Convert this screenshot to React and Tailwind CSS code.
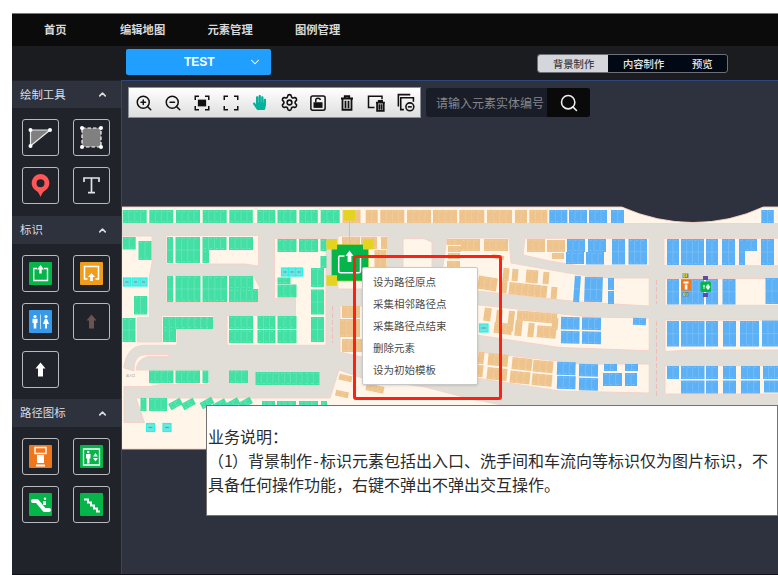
import React from "react";
import { ZoomIn, ZoomOut, Settings, ChevronDown, ChevronUp, Search } from "lucide-react";
import { FaHandPaper } from "react-icons/fa";

const GREEN = [
  [122.7, 237, 13, 12.5], [138.5, 241, 13, 19], [167, 237, 6, 26], [175.5, 237, 24.5, 26], [202.5, 237, 24, 13],
  [202.5, 250, 6.5, 13], [229, 237, 24, 13], [277.5, 239, 19, 13], [299, 239, 19, 13], [320.5, 239, 6, 12],
  [320.5, 256, 6, 12], [311, 268, 13, 19], [311, 289.5, 13, 25], [277.5, 277.5, 13, 6.5], [277.5, 284.5, 19, 13],
  [167, 276, 6, 26], [175.5, 276, 25, 26], [202.5, 276, 24.5, 26], [229, 276, 24, 13], [229, 289, 29, 13],
  [134, 296, 13, 18.5], [122.5, 318, 13, 24], [163, 317, 50, 12], [163, 329, 13, 13],
  [229, 316, 24, 13], [229, 330, 24, 13], [257.5, 316, 18, 13], [257.5, 330, 18, 13], [277.5, 316, 19, 13],
  [277.5, 330, 19, 13], [311, 317, 13, 25], [149, 370.5, 24.5, 12.5], [175.5, 370.5, 24.5, 12.5],
  [202.5, 370.5, 6, 12.5], [229, 370.5, 19, 12.5], [255.5, 372, 64, 13], [140.5, 398, 6, 13], [149, 398, 18, 13],
  [169, 400.5, 13, 7, -28], [182, 400.5, 13, 7, -28], [200.5, 399.5, 13, 7, -28], [213.5, 401, 13, 7, -28],
  [226.5, 400, 13, 7, -28], [239, 399.5, 13, 7, -28], [262, 401, 13, 5], [277, 401, 19, 5], [299, 401, 19, 5],
  [321, 401, 6, 5],
  [122.7, 210, 24, 13], [149.3, 210, 24, 13], [176, 210, 24, 13], [202.7, 210, 24, 13], [229.3, 210, 23.5, 13],
  [257.3, 210, 18, 13], [277.5, 210, 19, 13], [299.3, 210, 18.5, 13], [320.7, 210, 19, 13],
];
const ORANGE = [
  [342.5, 210, 18, 13], [365.7, 210, 12, 13], [380.3, 210, 24, 13], [407, 210, 24, 13], [433, 210, 24, 13],
  [459.3, 210, 25, 13], [487, 210, 25, 13], [515, 210, 12, 13], [529.3, 210, 18, 13],
  [342, 237, 18, 12], [361, 237, 16, 12], [381, 237, 6, 12], [374.5, 250, 12, 19],
  [447, 239, 14, 6], [461, 239, 19, 12], [484, 239, 24, 12], [448, 246, 13, 6], [448, 253, 12, 6], [447, 261, 13, 7],
  [527, 239, 18, 13], [547, 240, 18, 12], [552, 253, 12, 6], [492, 255, 12, 4, 10],
  [478, 277, 19, 13, 9], [503, 268, 6, 13, 5], [512, 269, 6, 12, 5], [526, 270, 12, 13, 4], [543, 272, 6, 12, 5],
  [509, 284, 38, 12, 6], [551, 287, 6, 12, 5], [501, 281, 6, 12, 5],
  [484, 308, 7, 13, 8], [496, 310, 6, 16, 6], [508, 311, 6, 20, 6], [494, 323, 18, 11, 7], [517, 312, 40, 10, 5],
  [515, 320, 7, 16, 6], [528, 323, 6, 14, 6], [537, 326, 19, 12, 5], [552, 318, 6, 12, 5],
  [478, 352, 6, 12, 6], [488, 354, 20, 12, 6], [512, 358, 20, 12, 6], [533, 360.5, 20, 12, 5],
  [477, 365, 6, 12, 6], [487, 368, 20, 12, 6], [510, 371.5, 20, 12, 6], [532, 374, 20, 12, 5],
  [342, 306, 18, 12], [340, 319, 20, 18], [342, 339, 20, 13],
  [339, 375, 13, 6, 12], [335.5, 391, 13, 6, 12], [366, 385, 18, 7, 12],
];
const BLUE = [
  [549.3, 210, 18, 13], [569, 210, 18, 13], [589, 210, 18, 13], [611, 210, 13, 13], [761.3, 210, 12.5, 13],
  [567, 239, 18, 13], [588, 239, 18, 13], [566, 252, 18, 12], [586, 252, 18, 12.5], [612, 239, 13, 25.5],
  [628.5, 239, 18.5, 25.5], [667, 239, 12, 26], [681, 239, 23, 26], [706, 239, 12, 26], [722, 239, 13, 26],
  [739, 239, 6, 26], [745, 239, 12, 12], [761, 239, 13, 26],
  [574, 276, 6, 26, 4], [584.5, 277, 18, 25, 2], [608, 278, 6, 12], [608, 291, 6, 13],
  [667, 279, 12, 25.5], [681, 279, 23, 25.5], [706, 279, 12, 25.5], [722.5, 279, 13, 25.5], [765.5, 278, 13, 26],
  [561, 317, 18.5, 12.5, 1], [582, 317.5, 19, 12.5, 1], [561, 331, 18.5, 12.5, 1], [582, 331.5, 19, 12.5, 1],
  [633, 318, 13, 7, 3], [667, 321, 12, 25.5], [681, 321, 23.5, 25.5], [706, 321, 12, 25.5], [723, 321, 13, 25.5],
  [740, 321, 19, 25.5], [762, 320.5, 18, 26],
  [557, 362, 18.5, 13, 2], [579, 364, 19, 12.5, 1], [557, 376, 18.5, 13, 2], [579, 378, 19, 12.5, 1],
  [604, 364, 13, 7], [625, 364, 13, 7], [603, 373, 19, 13], [625, 373, 12, 13],
  [667, 366, 12, 13], [681, 366, 23.5, 13], [706, 366, 12, 13], [723, 366, 13, 13], [741, 366, 19, 13], [763, 366, 17, 13],
  [681, 380.5, 23.5, 13], [706, 380.5, 12, 13], [723, 380.5, 13, 13], [741, 380.5, 19, 13], [764, 380.5, 16, 12],
];
const CYAN = [
  [123.5, 278, 7], [132, 278, 7], [140, 278, 7], [281.5, 268, 7], [288.5, 268, 7], [295.5, 268, 7],
  [146.5, 423.5, 8], [163, 423.5, 8], [479.5, 324, 8.5],
];
const ISLANDS = [
  "M121 207H621.700Q657 222.500 693 222.500Q730 222.500 763.300 207H779V223.500H121Z",
  "M121 236H152V263L149.500 276V317.500H137.500V342H161.700V315.500H213.500V329.500H177V345.300H142Q127 347 124 366V368L134 371Q133 356 145 354.600H169V356.600H148Q137 359 136 370H209.500V384.500H160L150 386.500H124V422.500H144.500L136 398H330L339 370L362 378L425 387L471 399L507 406V449H121Z",
  "M166 235.500H258.500V266L245 264H166Z",
  "M166 275.500H253L259.500 287L257 302.500H166Z",
  "M274.500 238.500H326V345.300H227V315.500H295.500V298.500H274.500Z",
  "M338 236H387.500V289H338Z",
  "M403 238.700H424L432 242V290H403Z",
  "M340 306H420V357H362L340 352Z",
  "M447 238H509L511 263L580 275L608 278H649.200V306L580 302L478 291L440 287Z",
  "M525 238.300H649.200V265.700H578L550 261L523 255Z",
  "M470 304L590 317L649.200 318V350.700L560 347.500L470 334Z",
  "M470 351L557 361L580 364H649.200V393L560 391L470 377Z",
  "M664 238.300H779V265.700H664Z",
  "M665 278.700H779V305.300H665Z",
  "M665 320H779V350H690L665 351.500Z",
  "M665 365.700H779V394H665Z",
];

function Lots({ items, fill }) {
  return items.map(([x, y, w, h, r], i) => (
    <g key={i} transform={`translate(${x} ${y})${r ? ` rotate(${r} ${w / 2} ${h / 2})` : ""}`}>
      <rect width={w} height={h} fill={fill} />
      <path
        d={`${Array.from({ length: Math.max(0, Math.round(w / 6) - 1) }, (_, k) => `M${((k + 1) * w) / Math.round(w / 6)} 0V${h}`).join("")}${h > 20 ? `M0 ${h / 2}H${w}` : ""}`}
        stroke="#fff" strokeOpacity=".25" strokeWidth=".6"
      />
      <path d={`M1.500 ${h - 1.5}H${w - 1}M1.500 1.500H${w - 1}`} stroke="#fff" strokeOpacity=".28" strokeWidth=".7" strokeDasharray="2 4" />
    </g>
  ));
}

function ParkingMap() {
  return (
    <svg className="block h-full w-full" viewBox="122 81 656 493" preserveAspectRatio="none">
      <path d="M121 207H621.700Q657 222.500 693 222.500Q730 222.500 763.300 207H779V449H121Z" fill="#e1ded8" />
      {ISLANDS.map((d) => <path key={d} d={d} fill="#fff6e9" stroke="#f5cfc7" strokeWidth=".9" />)}
      <path d="M332.500 306V343M656.500 280V304M656.500 321V396" stroke="#f0b9b3" strokeWidth=".9" strokeDasharray="5 2" />
      <Lots items={GREEN} fill="#43e0a5" />
      <Lots items={ORANGE} fill="#eec38c" />
      <Lots items={BLUE} fill="#5cb0f5" />
      {CYAN.map(([x, y, s]) => (
        <g key={`${x}-${y}`}>
          <rect x={x} y={y} width={s} height="8" fill="#6de6e0" stroke="#26f5e3" strokeWidth="1.200" />
          <path d={`M${x + 2} ${y + 4}h${s - 4}`} stroke="#5b9fc0" strokeWidth="1.200" />
        </g>
      ))}
      <text x="126" y="377" fontSize="3" fill="#8e8a84" fontFamily="Noto Sans CJK SC">出入口</text>
      <path d="M349.500 220V244" stroke="#e4d420" />
      <rect x="331.500" y="244.500" width="37" height="36.500" fill="#06b549" stroke="#bfd12b" strokeWidth=".7" />
      <path d="M344.500 256H340Q338.700 256 338.700 257.500V271Q338.700 272.700 340.500 272.700H359Q360.500 272.700 360.500 271V257.500Q360.500 256 359 256H355" fill="none" stroke="#fff" strokeWidth="1.500" />
      <path d="M349.500 250.500L353.500 256H351.400V262H347.600V256H345.500Z" fill="#fff" />
      <path d="M344 210h11v10.500h-11zM326.500 239h10.500v10.500h-10.500zM363 239h10.500v10.500h-10.500zM326.500 275.300h10.500v10.500h-10.500z" fill="#e4d420" />
      <path d="M682.500 273.500h6v4.500h-6zM682.500 292h6v4.500h-6z" fill="#5c8aa0" />
      <path d="M683.500 274.500h1.500v2.500h-1.500zM686.500 274v3M683.500 293h1.500v2.500h-1.500zM687 293v3" stroke="#d9d52c" strokeWidth=".9" fill="none" />
      <rect x="681" y="280" width="10" height="10.500" fill="#f0761b" />
      <path d="M683.500 281.500h5v2h-5zM684.800 284.500h2.600v5h-2.600z" fill="#fff" />
      <path d="M703 276h5v4h-5zM703 293h5v4h-5z" fill="#6649a5" />
      <rect x="700.500" y="281.500" width="10.500" height="10.500" rx="1.500" fill="#06b549" />
      <path d="M704 285v4M703 286h2M708 284.500l-1.700 2h3.400zM708 289.500l-1.700-2h3.400z" fill="#fff" stroke="#fff" strokeWidth=".8" />
    </svg>
  );
}

function Icon({ children, box = 24, className = "size-[18px]" }) {
  return (
    <svg viewBox={`0 0 ${box} ${box}`} className={className} fill="none" stroke="currentColor" strokeWidth="2">
      {children}
    </svg>
  );
}

function Trash() {
  return <path d="M4 6H20M9 5V3H15V5M6 7V21H18V7M10 9V19M14 9V19" />;
}

function Tool({ children, color = "" }) {
  return <div className={`flex w-[29.1px] items-center justify-center ${color}`}>{children}</div>;
}

function Toolbar() {
  return (
    <div className="flex h-[31px] w-[293px] border border-[#8a8f94] bg-gradient-to-b from-white to-[#dedede] text-[#111]">
      <Tool><ZoomIn size={18} strokeWidth={2} /></Tool>
      <Tool><ZoomOut size={18} strokeWidth={2} /></Tool>
      <Tool><Icon><path d="M3 8V3H8M16 3H21V8M21 16V21H16M8 21H3V16" /><rect x="7.500" y="8.500" width="9" height="7" fill="currentColor" /></Icon></Tool>
      <Tool><Icon><path d="M3 8V3H8M16 3H21V8M21 16V21H16M8 21H3V16" /></Icon></Tool>
      <Tool color="text-[#07b29c]"><FaHandPaper size={15} /></Tool>
      <Tool><Settings size={19} strokeWidth={2} /></Tool>
      <Tool><Icon><rect x="2.500" y="2.500" width="19" height="19" rx="2.500" /><rect x="6" y="11" width="12" height="7.500" fill="currentColor" stroke="none" /><path d="M9 11V8Q9 5.500 12 5.500Q15 5.500 15 8" /></Icon></Tool>
      <Tool><Icon><g strokeWidth="2.400"><Trash /></g></Icon></Tool>
      <Tool><Icon><path d="M10 18H2V3H20V7" /><g transform="translate(9 7) scale(.74)" strokeWidth="3.200"><Trash /></g></Icon></Tool>
      <Tool><Icon className="size-[19px]"><path d="M3 17V2H18M10 21H6V6H22V11" /><circle cx="17.500" cy="17.500" r="5" /><path d="M15 17.500H20" /></Icon></Tool>
    </div>
  );
}

function Tile({ children, bg = "" }) {
  return (
    <div className="flex size-[37px] items-center justify-center rounded-[3px] border border-[#b9babd]">
      <div className={`size-[23px] rounded-[1px] ${bg}`}>
        <svg viewBox="0 0 23 23" className="block size-full overflow-visible" fill="none">{children}</svg>
      </div>
    </div>
  );
}

function Section({ title, first, children }) {
  return (
    <section>
      <div className={`flex items-center justify-between bg-[#2e323d] pr-[13px] pl-2 text-[#dcdde0] ${first ? "h-[27px]" : "h-7"}`}>
        <h2 className="text-[11.4px] leading-none">{title}</h2>
        <ChevronUp size={11} strokeWidth={3.5} />
      </div>
      <div className="grid grid-cols-[37px_37px] gap-x-[14px] gap-y-[11px] px-[10px] pt-[11px] pb-[11px]">{children}</div>
    </section>
  );
}

const arrow = "M11.500 4.500L16.500 10.500H14V18.500H9V10.500H6.500Z";

function Sidebar() {
  return (
    <aside className="w-[109px] shrink-0 bg-[#20232a] pt-px">
      <Section title="绘制工具" first>
        <Tile><path d="M1.500 4H21L1.500 20Z" fill="#808080" stroke="#e9e9e9" strokeWidth="1.200" /><g fill="#fff"><circle cx="1.500" cy="4" r="2" /><circle cx="21" cy="4" r="2" /><circle cx="1.500" cy="20" r="2" /></g></Tile>
        <Tile><path d="M2 2H21V21H2Z" fill="#808080" stroke="#fff" strokeWidth="1.200" strokeDasharray="3.500 2" /><g fill="#fff"><circle cx="2" cy="2" r="2" /><circle cx="21" cy="2" r="2" /><circle cx="2" cy="21" r="2" /><circle cx="21" cy="21" r="2" /></g></Tile>
        <Tile><path fillRule="evenodd" d="M11.500 0A9 9 0 0 0 7.500 17Q9.500 18 11.500 23Q13.500 18 15.500 17A9 9 0 0 0 11.500 0ZM11.500 5.200A4 4 0 1 1 11.500 13.200A4 4 0 0 1 11.500 5.200Z" fill="#ff5757" /></Tile>
        <Tile><path d="M4 8V4H19V8M11.500 4V18.500M8 18.700H15" stroke="#e3e3e3" strokeWidth="1.700" /></Tile>
      </Section>
      <div className="h-px" />
      <Section title="标识">
        <Tile bg="bg-[#06b549]"><path d="M8 6.500H4.700V18.500H18.500V6.500H15" stroke="#fff" strokeWidth="1.400" /><path d="M11.500 3L15 7.500H12.700V11.500H10.300V7.500H8Z" fill="#fff" /></Tile>
        <Tile bg="bg-[#f09d1b]"><path d="M7.500 17H4.500V4.500H18.500V17H15.500" stroke="#fff" strokeWidth="1.500" /><path d="M11.500 11L15 15H12.800V19H10.200V15H8Z" fill="#fff" /></Tile>
        <Tile bg="bg-[#3699ea]"><path d="M11.500 4.500V19" stroke="#b9dcf7" /><g fill="#fff"><circle cx="6" cy="6.500" r="1.600" /><circle cx="17" cy="6.500" r="1.600" /><path d="M3.500 8.700H8.500V13H7.300V18.500H4.700V13H3.500ZM16 8.700H18L20 14H18V18.500H16V14H14Z" /></g></Tile>
        <Tile><path d={arrow} fill="#6b5350" /></Tile>
        <Tile><path d={arrow} fill="#fff" /></Tile>
      </Section>
      <Section title="路径图标">
        <Tile bg="bg-[#f0761b]"><path d="M6 2.500H17V8.500H6Z" stroke="#fff" strokeWidth="1.400" /><path d="M8 10H15V18H8ZM7 19.500H16V21.500H7Z" fill="#fff" /></Tile>
        <Tile bg="bg-[#06b549]"><path d="M3.500 4H19.500V20H3.500Z" stroke="#fff" strokeWidth="1.300" /><path d="M6 9H10.500V13.500H9.500V18.500H7V13.500H6ZM15.500 8L18 11.500H13ZM15.500 16.500L18 13H13Z" fill="#fff" /><circle cx="8.200" cy="7" r="1.300" fill="#fff" /></Tile>
        <Tile bg="bg-[#06b549]"><path d="M4 8H8L15.500 17H20" stroke="#fff" strokeWidth="4" strokeLinecap="round" strokeLinejoin="round" /><path d="M14 8H17V12H14Z" fill="#fff" /><circle cx="16" cy="5.800" r="1.200" fill="#fff" /></Tile>
        <Tile bg="bg-[#06b549]"><path d="M4 6.500H8V9.500H11V12.500H14V15.500H17V18.500H20" stroke="#fff" strokeWidth="2" /></Tile>
      </Section>
    </aside>
  );
}

export default function App() {
  return (
    <div className="relative h-[575px] w-[778px] overflow-hidden bg-white pt-[13px] pl-3 font-['Noto_Sans_CJK_SC',sans-serif]">
      <div className="flex h-[562px] flex-col border-t border-[#77797b] border-b border-b-[#111019]">
        <nav className="flex h-8 shrink-0 items-center bg-[#0b0b0b] pb-px text-[11.3px] leading-none font-bold text-[#d8d8d8]">
          <a className="ml-8 w-[76px]">首页</a>
          <a className="w-[87.5px]">编辑地图</a>
          <a className="w-[87.5px]">元素管理</a>
          <a>图例管理</a>
        </nav>
        <header className="flex h-[34px] shrink-0 items-start justify-between bg-[#1b1c20] pr-[50px] pl-[114px]">
          <button className="mt-[3px] flex h-[26px] w-[145px] items-center justify-between rounded-[2px] bg-[#219fff] pr-[9px] pl-[58px] text-white">
            <span className="font-['Liberation_Sans',sans-serif] text-[12px] leading-none font-bold">TEST</span>
            <ChevronDown size={14} strokeWidth={1.8} />
          </button>
          <div className="mt-2 flex h-[19px] w-[191px] overflow-hidden rounded-[3px] border border-[#6c7079] bg-[#020814] text-[10.3px] leading-[17px] font-medium text-[#e8e8ea]">
            <span className="w-[70px] bg-[#d4d6dc] pl-[15px] text-[#3c3f48]">背景制作</span>
            <span className="w-[69px] pl-[15px]">内容制作</span>
            <span className="pl-[15px]">预览</span>
          </div>
        </header>
        <div className="flex min-h-0 flex-1">
          <Sidebar />
          <main className="relative min-w-0 flex-1 border-t border-l border-[#2b477b] bg-[#2d323e]">
            <ParkingMap />
            <div className="absolute top-[6px] left-[6px] flex items-start gap-[5px]">
              <Toolbar />
              <div className="mt-px flex h-[29px] w-[164px] overflow-hidden rounded-[3px] bg-[#191d27]">
                <span className="flex w-[121px] items-center pl-[10px] text-[12px] leading-none whitespace-nowrap text-[#85878c]">请输入元素实体编号</span>
                <span className="flex flex-1 items-center justify-center bg-[#0a0a0b] text-[#eee]"><Search size={20} strokeWidth={1.9} /></span>
              </div>
            </div>
            <div className="absolute top-[174px] left-[231px] h-[145px] w-[149px] rounded-[3px] border-3 border-[#ff2015]" />
            <ul className="absolute top-[186px] left-[240px] h-[118px] w-[116px] rounded-[2px] border border-[#c8c8c8] bg-white py-[3px] pl-[10px] text-[10.5px] leading-[22px] text-[#4a4a4a] shadow-sm">
              <li>设为路径原点</li>
              <li>采集相邻路径点</li>
              <li>采集路径点结束</li>
              <li>删除元素</li>
              <li>设为初始模板</li>
            </ul>
            <div className="absolute top-[324px] left-[84px] h-[111px] w-[572px] border border-[#737373] bg-white pt-[18px] pl-px text-[16px] leading-[24.2px] whitespace-nowrap text-[#2b2b2b]">
              <p>业务说明：</p>
              <p>（<span className="inline-block w-2">1</span>）背景制作<span className="inline-block w-2 text-center">-</span>标识元素包括出入口、洗手间和车流向等标识仅为图片标识，不</p>
              <p>具备任何操作功能，右键不弹出不弹出交互操作。</p>
            </div>
          </main>
        </div>
      </div>
    </div>
  );
}
